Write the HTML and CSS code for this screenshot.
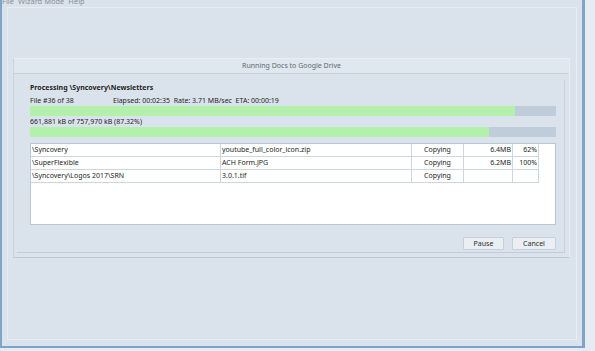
FILE: index.html
```html
<!DOCTYPE html>
<html lang="en">
<head>
    <meta charset="UTF-8">
    <title>Syncovery</title>
    <link rel="stylesheet" href="styles.css">
</head>
<body>
    <div id="window">
        <div id="menubar">
            <span>File</span>
            <span>Wizard Mode</span>
            <span>Help</span>
        </div>
        <div id="client">
            <div id="dialog">
                <div class="dialog-title">Running Docs to Google Drive</div>
                <div class="group">
                    <div class="line bold">Processing \Syncovery\Newsletters</div>
                    <div class="line stats">
                        <span class="file-count">File #36 of 38</span>
                        <span>Elapsed: 00:02:35&nbsp; Rate: 3.71 MB/sec&nbsp; ETA: 00:00:19</span>
                    </div>
                    <div class="bar"><div class="fill" style="width: 92.2%"></div></div>
                    <div class="line">661,881 kB of 757,970 kB (87.32%)</div>
                    <div class="bar"><div class="fill" style="width: 87.32%"></div></div>
                    <div class="list">
                        <div class="rows">
                            <div class="cell">\Syncovery</div>
                            <div class="cell">youtube_full_color_icon.zip</div>
                            <div class="cell center">Copying</div>
                            <div class="cell right">6.4MB</div>
                            <div class="cell right">62%</div>

                            <div class="cell">\SuperFlexible</div>
                            <div class="cell">ACH Form.JPG</div>
                            <div class="cell center">Copying</div>
                            <div class="cell right">6.2MB</div>
                            <div class="cell right">100%</div>

                            <div class="cell">\Syncovery\Logos 2017\SRN</div>
                            <div class="cell">3.0.1.tif</div>
                            <div class="cell center">Copying</div>
                            <div class="cell right"></div>
                            <div class="cell right"></div>
                        </div>
                    </div>
                    <div class="buttons">
                        <button class="btn pause">Pause</button>
                        <button class="btn cancel">Cancel</button>
                    </div>
                </div>
            </div>
        </div>
    </div>
</body>
</html>
```

FILE: styles.css
```css
* {
    margin: 0;
    padding: 0;
    box-sizing: border-box;
}
html, body {
    width: 595px;
    height: 351px;
    overflow: hidden;
}
body {
    background: #e7ecf3;
    font-family: "Noto Sans", "Open Sans", sans-serif;
    font-size: 7px;
    color: #1e1e1e;
}
#window {
    width: 585px;
    height: 348px;
    background: #dae3ec;
    border-left: 2px solid #7ea4c9;
    border-right: 3px solid #7ea4c9;
    border-bottom: 2px solid #7ea4c9;
    display: flex;
    flex-direction: column;
}
#menubar {
    height: 7px;
    overflow: hidden;
    display: flex;
    gap: 4px;
    color: #8a8f96;
    font-size: 7.5px;
    line-height: 8px;
}
#menubar span {
    margin-top: -3px;
}
#client {
    margin: 0 5px 6px 5px;
    flex: 1;
    border: 1px solid #e6edf4;
    border-right-color: #e9eff5;
    padding: 50px 6px 0 5px;
}
#dialog {
    width: 557px;
    height: 200px;
    border: 1px solid #e8eef4;
    border-bottom: 1px solid #bccad7;
    border-left-color: #c9d4df;
    display: flex;
    flex-direction: column;
}
.dialog-title {
    height: 15px;
    line-height: 14px;
    text-align: center;
    color: #626a73;
    background: #dfe7ef;
    border-bottom: 1px solid #c6d1dc;
}
.group {
    flex: 1;
    margin: 6px 4px 5px 3px;
    border-right: 1px solid #c7d2dd;
    border-bottom: 1px solid #c0ccd8;
    padding: 3px 8px 2px 13px;
    display: flex;
    flex-direction: column;
}
.line {
    height: 10px;
    line-height: 10px;
    white-space: nowrap;
}
.bold {
    font-weight: bold;
    margin-bottom: 3px;
}
.stats {
    display: flex;
}
.file-count {
    width: 83px;
}
.bar {
    height: 10px;
    background: #bfccda;
    margin-bottom: 1px;
}
.fill {
    height: 100%;
    background: #b2f0ab;
}
.list {
    margin-top: 5px;
    height: 82px;
    background: #fff;
    border: 1px solid #b9c6d3;
}
.rows {
    display: grid;
    grid-template-columns: 190px 191px 52px 49px 26px;
    width: 508px;
}
.cell {
    height: 13px;
    line-height: 12px;
    padding: 0 1px;
    border-right: 1px solid #cdd6df;
    border-bottom: 1px solid #cdd6df;
    white-space: nowrap;
    overflow: hidden;
}
.center {
    text-align: center;
}
.right {
    text-align: right;
}
.buttons {
    margin-top: 12px;
    display: flex;
    justify-content: flex-end;
    gap: 8px;
}
.btn {
    height: 13px;
    font-family: inherit;
    font-size: 7px;
    color: #2a2a2a;
    background: #eaeff4;
    border: 1px solid #c6d0da;
    border-radius: 1px;
}
.pause {
    width: 41px;
}
.cancel {
    width: 44px;
}
```
